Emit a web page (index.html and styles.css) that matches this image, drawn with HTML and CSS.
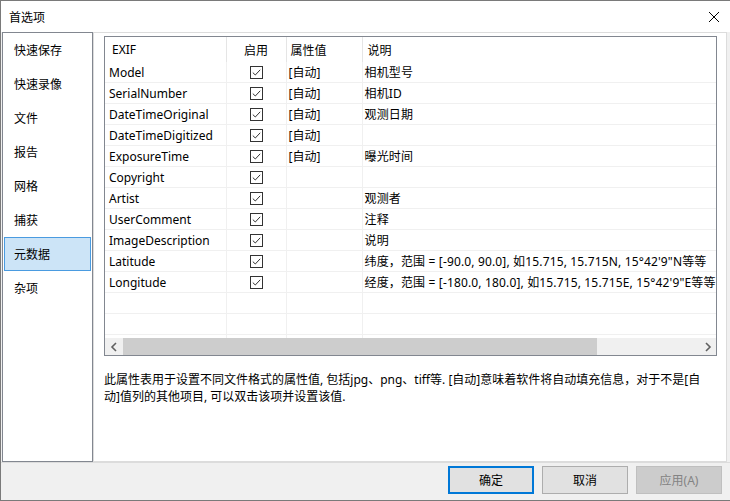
FILE: index.html
```html
<!DOCTYPE html>
<html lang="zh-CN">
<head>
    <meta charset="UTF-8">
    <title>首选项</title>
    <link rel="stylesheet" href="styles.css">
</head>
<body>
    <div class="window">
        <div class="titlebar">
            <span class="title">首选项</span>
            <svg class="close" width="12" height="12" viewBox="0 0 12 12"><path d="M1 1L11 11M11 1L1 11" stroke="#000" stroke-width="1" fill="none"/></svg>
        </div>
        <div class="main">
            <ul class="nav">
                <li>快速保存</li>
                <li>快速录像</li>
                <li>文件</li>
                <li>报告</li>
                <li>网格</li>
                <li>捕获</li>
                <li class="active">元数据</li>
                <li>杂项</li>
            </ul>
            <div class="panel">
                <div class="listview">
                    <div class="list-body">
                        <table>
                            <colgroup>
                                <col class="c-name"><col class="c-on"><col class="c-val"><col class="c-desc">
                            </colgroup>
                            <thead>
                                <tr><th class="h-name">EXIF</th><th class="h-on">启用</th><th class="h-val">属性值</th><th class="h-desc">说明</th></tr>
                            </thead>
                            <tbody>
                                <tr><td>Model</td><td class="on"><span class="chk"></span></td><td>[自动]</td><td>相机型号</td></tr>
                                <tr><td>SerialNumber</td><td class="on"><span class="chk"></span></td><td>[自动]</td><td>相机ID</td></tr>
                                <tr><td>DateTimeOriginal</td><td class="on"><span class="chk"></span></td><td>[自动]</td><td>观测日期</td></tr>
                                <tr><td>DateTimeDigitized</td><td class="on"><span class="chk"></span></td><td>[自动]</td><td></td></tr>
                                <tr><td>ExposureTime</td><td class="on"><span class="chk"></span></td><td>[自动]</td><td>曝光时间</td></tr>
                                <tr><td>Copyright</td><td class="on"><span class="chk"></span></td><td></td><td></td></tr>
                                <tr><td>Artist</td><td class="on"><span class="chk"></span></td><td></td><td>观测者</td></tr>
                                <tr><td>UserComment</td><td class="on"><span class="chk"></span></td><td></td><td>注释</td></tr>
                                <tr><td>ImageDescription</td><td class="on"><span class="chk"></span></td><td></td><td>说明</td></tr>
                                <tr><td>Latitude</td><td class="on"><span class="chk"></span></td><td></td><td>纬度，范围 = [-90.0, 90.0], 如15.715, 15.715N, 15°42'9"N等等</td></tr>
                                <tr><td>Longitude</td><td class="on"><span class="chk"></span></td><td></td><td>经度，范围 = [-180.0, 180.0], 如15.715, 15.715E, 15°42'9"E等等</td></tr>
                                <tr><td></td><td></td><td></td><td></td></tr>
                                <tr><td></td><td></td><td></td><td></td></tr>
                                <tr><td></td><td></td><td></td><td></td></tr>
                            </tbody>
                        </table>
                    </div>
                    <div class="hscroll">
                        <span class="arrow"><svg width="8" height="10" viewBox="0 0 8 10"><path d="M6 1L2 5L6 9" stroke="#606060" stroke-width="1.6" fill="none"/></svg></span>
                        <span class="thumb"></span>
                        <span class="track"></span>
                        <span class="arrow"><svg width="8" height="10" viewBox="0 0 8 10"><path d="M2 1L6 5L2 9" stroke="#606060" stroke-width="1.6" fill="none"/></svg></span>
                    </div>
                </div>
                <p class="note">此属性表用于设置不同文件格式的属性值, 包括jpg、png、tiff等. [自动]意味着软件将自动填充信息，对于不是[自<br>动]值列的其他项目, 可以双击该项并设置该值.</p>
            </div>
        </div>
        <div class="footer">
            <button class="btn default">确定</button>
            <button class="btn">取消</button>
            <button class="btn" disabled>应用(A)</button>
        </div>
    </div>
</body>
</html>
```

FILE: styles.css
```css
body { margin: 0; background: #f0f0f0; font-family: "Noto Sans", "Noto Sans CJK SC", sans-serif; font-size: 12px; color: #000; }
.window { width: 730px; height: 501px; box-sizing: border-box; border: 1px solid #7a7a7a; border-right: none; background: #f0f0f0; display: flex; flex-direction: column; }
.titlebar { height: 31px; background: #fff; display: flex; align-items: center; justify-content: space-between; padding: 0 9px 0 8px; }
.title { font-size: 12px; }
.close { display: block; margin-right: 1px; }
.main { display: flex; height: 430px; padding-left: 1px; }
.nav { list-style: none; margin: 0; padding: 0; width: 91px; box-sizing: border-box; border: 1px solid #828790; background: #fff; }
.nav li { height: 34px; box-sizing: border-box; margin: 0 1px; padding-left: 9px; border: 1px solid transparent; display: flex; align-items: center; }
.nav li.active { background: #cce4f7; border-color: #4a9be0; }
.panel { width: 634px; box-sizing: border-box; border: 1px solid #dcdcdc; background: #fff; padding: 3px 0 0 10px; }
.listview { width: 613px; box-sizing: border-box; border: 1px solid #828790; }
.list-body { height: 301px; overflow: hidden; }
table { border-collapse: collapse; table-layout: fixed; width: 691px; }
.c-name { width: 121px; }
.c-on { width: 60px; }
.c-val { width: 76px; }
.c-desc { width: 434px; }
th { height: 25px; padding: 0; font-weight: normal; text-align: left; border-right: 1px solid #e5e5e5; }
th.h-name { padding-left: 7px; }
th.h-on { text-align: center; }
th.h-val { padding-left: 4px; }
th.h-desc { padding-left: 5px; border-right: none; }
td { height: 20px; padding: 0 0 0 2px; border-right: 1px solid #f0f0f0; border-bottom: 1px solid #f0f0f0; white-space: nowrap; overflow: hidden; }
td:first-child { padding-left: 4px; }
td:last-child { letter-spacing: 0.15px; }
td.on { text-align: center; padding: 0; }
.chk { display: inline-block; width: 11px; height: 11px; border: 1px solid #333; vertical-align: middle; position: relative; top: -1px; background: url("data:image/svg+xml;utf8,<svg xmlns='http://www.w3.org/2000/svg' width='11' height='11'><path d='M1.8 5.6L4.3 8L9.2 2.8' stroke='%23333' stroke-width='1' fill='none'/></svg>") no-repeat; }
.hscroll { height: 17px; background: #f0f0f0; display: flex; align-items: stretch; }
.arrow { width: 17px; display: flex; align-items: center; justify-content: center; }
.thumb { width: 474px; background: #cdcdcd; margin-left: 1px; }
.track { flex: 1; }
.note { margin: 15px 0 0; line-height: 17px; white-space: nowrap; }
.footer { flex: 1; display: flex; justify-content: flex-end; align-items: flex-start; gap: 8px; padding: 3px 8px 0 0; border-top: 1px solid #dcdcdc; }
.btn { width: 86px; height: 28px; box-sizing: border-box; font-family: inherit; font-size: 12px; color: #000; background: #e1e1e1; border: 1px solid #adadad; padding: 0; }
.btn.default { border: 2px solid #0078d7; }
.btn:disabled { background: #cccccc; border-color: #bfbfbf; color: #838383; }
```
